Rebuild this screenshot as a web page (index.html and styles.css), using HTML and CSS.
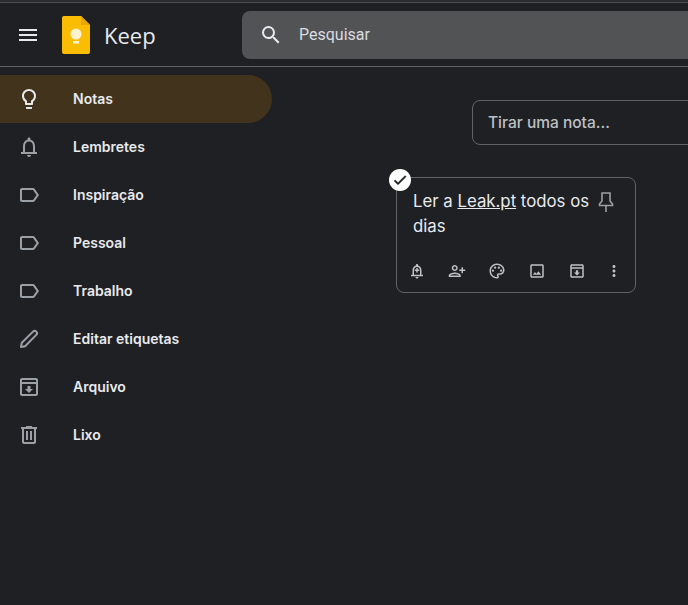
FILE: index.html
```html
<!DOCTYPE html>
<html lang="pt">
<head>
<meta charset="utf-8">
<title>Keep</title>
<link rel="stylesheet" href="styles.css">
</head>
<body>
<div class="app">
  <header class="topbar">
    <button class="menu-btn" aria-label="Menu">
      <svg viewBox="0 0 24 24" class="icon"><path d="M3 18h18v-2H3zm0-5h18v-2H3zm0-7v2h18V6z" fill="#e8eaed"/></svg>
    </button>
    <div class="brand">
      <svg viewBox="0 0 28 38" class="logo"><path d="M2 0h17l9 9v27a2 2 0 0 1-2 2H2a2 2 0 0 1-2-2V2a2 2 0 0 1 2-2z" fill="#fbbc04"/><path d="M19 0l9 9h-9z" fill="#e8a800"/><circle cx="14" cy="18" r="5.500" fill="#fdf3d0"/><rect x="11" y="25" width="6" height="2.600" fill="#fdf3d0"/></svg>
      <span class="brand-name">Keep</span>
    </div>
    <div class="search">
      <svg viewBox="0 0 24 24" class="icon"><path d="M15.500 14h-.79l-.28-.27A6.470 6.470 0 0 0 16 9.500 6.500 6.500 0 1 0 9.500 16c1.610 0 3.090-.59 4.230-1.570l.27.28v.79l5 4.990L20.490 19zm-6 0C7.010 14 5 11.990 5 9.500S7.010 5 9.500 5 14 7.010 14 9.500 11.990 14 9.500 14z" fill="#e8eaed"/></svg>
      <span class="search-text">Pesquisar</span>
    </div>
  </header>
  <div class="body">
    <nav class="sidebar">
      <a class="nav-item active">
        <svg viewBox="0 0 24 24" class="icon"><path d="M9 21c0 .55.45 1 1 1h4c.55 0 1-.45 1-1v-1H9zm3-19C8.140 2 5 5.140 5 9c0 2.380 1.190 4.470 3 5.740V17c0 .55.45 1 1 1h6c.55 0 1-.45 1-1v-2.260c1.810-1.270 3-3.360 3-5.740 0-3.860-3.140-7-7-7zm2.850 11.100-.85.6V16h-4v-2.300l-.85-.6A4.997 4.997 0 0 1 7 9c0-2.760 2.240-5 5-5s5 2.240 5 5c0 1.630-.8 3.160-2.150 4.100z" fill="#e8eaed"/></svg>
        <span>Notas</span>
      </a>
      <a class="nav-item">
        <svg viewBox="0 0 24 24" class="icon dim"><path d="M18 17v-6c0-3.070-1.630-5.640-4.500-6.320V4c0-.83-.67-1.500-1.500-1.500s-1.500.67-1.500 1.500v.68C7.640 5.360 6 7.920 6 11v6H4v2h16v-2h-2zm-2 0H8v-6c0-2.480 1.510-4.500 4-4.500s4 2.020 4 4.500v6zm-4 5c1.100 0 2-.9 2-2h-4c0 1.100.9 2 2 2z"/></svg>
        <span>Lembretes</span>
      </a>
      <a class="nav-item">
        <svg viewBox="0 0 24 24" class="icon dim"><path d="M17.630 5.840C17.270 5.330 16.670 5 16 5L5 5.010C3.900 5.010 3 5.900 3 7v10c0 1.100.9 1.990 2 1.990L16 19c.67 0 1.270-.33 1.630-.84L22 12l-4.370-6.160zM16 17H5V7h11l3.550 5L16 17z"/></svg>
        <span>Inspiração</span>
      </a>
      <a class="nav-item">
        <svg viewBox="0 0 24 24" class="icon dim"><path d="M17.630 5.840C17.270 5.330 16.670 5 16 5L5 5.010C3.900 5.010 3 5.900 3 7v10c0 1.100.9 1.990 2 1.990L16 19c.67 0 1.270-.33 1.630-.84L22 12l-4.370-6.160zM16 17H5V7h11l3.550 5L16 17z"/></svg>
        <span>Pessoal</span>
      </a>
      <a class="nav-item">
        <svg viewBox="0 0 24 24" class="icon dim"><path d="M17.630 5.840C17.270 5.330 16.670 5 16 5L5 5.010C3.900 5.010 3 5.900 3 7v10c0 1.100.9 1.990 2 1.990L16 19c.67 0 1.270-.33 1.630-.84L22 12l-4.370-6.160zM16 17H5V7h11l3.550 5L16 17z"/></svg>
        <span>Trabalho</span>
      </a>
      <a class="nav-item">
        <svg viewBox="0 0 24 24" class="icon line"><path d="M4 20l.8-4.200L16 4.600a2.300 2.300 0 0 1 3.300 3.300L8.100 19.200z"/></svg>
        <span>Editar etiquetas</span>
      </a>
      <a class="nav-item">
        <svg viewBox="0 0 24 24" class="icon dim"><path d="M19 3H5c-1.100 0-2 .9-2 2v14c0 1.100.9 2 2 2h14c1.100 0 2-.9 2-2V5c0-1.100-.9-2-2-2zm0 2v2H5V5h14zM5 19V9h14v10H5zm8.500-8h-3v3H8l4 4 4-4h-2.500z"/></svg>
        <span>Arquivo</span>
      </a>
      <a class="nav-item">
        <svg viewBox="0 0 24 24" class="icon dim"><path d="M15 4V3H9v1H4v2h1v13c0 1.100.9 2 2 2h10c1.100 0 2-.9 2-2V6h1V4h-5zm2 15H7V6h10v13zM9 8h2v9H9zm4 0h2v9h-2z"/></svg>
        <span>Lixo</span>
      </a>
    </nav>
    <main class="content">
      <div class="composer">Tirar uma nota...</div>
      <article class="note">
        <span class="check"><svg viewBox="0 0 24 24" class="check-icon"><path d="M9 16.200 4.800 12l-1.400 1.400L9 19 21 7l-1.400-1.400z"/></svg></span>
        <div class="note-head">
          <p class="note-text">Ler a <u>Leak.pt</u> todos os dias</p>
          <svg viewBox="0 0 24 24" class="icon pin"><path d="M8 3h8v8l2.500 3v1.500h-13V14L8 11zM12 15.500V22"/></svg>
        </div>
        <div class="note-tools">
          <svg viewBox="0 0 24 24" class="tool"><path d="M18 17v-6c0-3.070-1.630-5.640-4.500-6.320V4c0-.83-.67-1.500-1.500-1.500s-1.500.67-1.500 1.500v.68C7.640 5.360 6 7.920 6 11v6H4v2h16v-2h-2zm-2 0H8v-6c0-2.480 1.510-4.500 4-4.500s4 2.020 4 4.500v6zm-4 5c1.100 0 2-.9 2-2h-4c0 1.100.9 2 2 2zm1-14h-2v2H9v2h2v2h2v-2h2v-2h-2z"/></svg>
          <svg viewBox="0 0 24 24" class="tool"><path d="M9 12c2.200 0 4-1.800 4-4s-1.800-4-4-4-4 1.800-4 4 1.800 4 4 4zm0-6c1.100 0 2 .9 2 2s-.9 2-2 2-2-.9-2-2 .9-2 2-2zm0 8c-2.700 0-8 1.300-8 4v2h16v-2c0-2.700-5.300-4-8-4zm-6 4c.2-.7 3.300-2 6-2s5.800 1.300 6 2H3zm17-8V7h-2v3h-3v2h3v3h2v-3h3v-2z"/></svg>
          <svg viewBox="0 0 24 24" class="tool"><path d="M12 22C6.490 22 2 17.510 2 12S6.490 2 12 2s10 4.040 10 9c0 3.310-2.690 6-6 6h-1.770c-.28 0-.5.22-.5.5 0 .12.05.23.13.33.41.47.64 1.060.64 1.670A2.500 2.500 0 0 1 12 22zm0-18c-4.410 0-8 3.590-8 8s3.590 8 8 8c.28 0 .5-.22.5-.5a.54.54 0 0 0-.14-.35c-.41-.46-.63-1.050-.63-1.650a2.500 2.500 0 0 1 2.500-2.500H16c2.210 0 4-1.790 4-4 0-3.860-3.590-7-8-7z"/><circle cx="6.500" cy="11.500" r="1.500"/><circle cx="9.500" cy="7.500" r="1.500"/><circle cx="14.500" cy="7.500" r="1.500"/><circle cx="17.500" cy="11.500" r="1.500"/></svg>
          <svg viewBox="0 0 24 24" class="tool"><path d="M19 3H5c-1.100 0-2 .9-2 2v14c0 1.100.9 2 2 2h14c1.100 0 2-.9 2-2V5c0-1.100-.9-2-2-2zm0 16H5V5h14v14zm-5.040-6.710-2.750 3.540-1.960-2.360L6.500 17h11z"/></svg>
          <svg viewBox="0 0 24 24" class="tool"><path d="M19 3H5c-1.100 0-2 .9-2 2v14c0 1.100.9 2 2 2h14c1.100 0 2-.9 2-2V5c0-1.100-.9-2-2-2zm0 2v2H5V5h14zM5 19V9h14v10H5zm8.500-8h-3v3H8l4 4 4-4h-2.500z"/></svg>
          <svg viewBox="0 0 24 24" class="tool dots"><path d="M12 8c1.100 0 2-.9 2-2s-.9-2-2-2-2 .9-2 2 .9 2 2 2zm0 2c-1.100 0-2 .9-2 2s.9 2 2 2 2-.9 2-2-.9-2-2-2zm0 6c-1.100 0-2 .9-2 2s.9 2 2 2 2-.9 2-2-.9-2-2-2z"/></svg>
        </div>
      </article>
    </main>
  </div>
</div>
</body>
</html>
```
FILE: styles.css
```css
* { box-sizing: border-box; }
html, body { margin: 0; height: 100%; }
body {
  background: #1f2024;
  color: #e8eaed;
  font-family: Inter, Roboto, "Liberation Sans", sans-serif;
  overflow: hidden;
}
.app { width: 688px; height: 605px; overflow: hidden; border-top: 2px solid #2b2c2f; }
.topbar {
  height: 65px;
  display: flex;
  align-items: flex-start;
  border-top: 1px solid #4a4b4e;
  border-bottom: 1px solid #5f6368;
  width: 1000px;
}
.menu-btn {
  border: 0;
  background: none;
  padding: 0;
  margin: 20px 0 0 16px;
  width: 24px;
  height: 24px;
}
.icon { width: 24px; height: 24px; display: block; flex: none; }
.dim { fill: #9aa0a6; }
.line { fill: none; stroke: #9aa0a6; stroke-width: 2; stroke-linejoin: round; }
.brand { display: flex; align-items: center; margin: 13px 0 0 22px; width: 180px; }
.logo { width: 28px; height: 38px; flex: none; }
.brand-name { font-size: 22px; margin: -1px 0 0 14px; color: #e8eaed; font-family: "Open Sans", Roboto, sans-serif; }
.search {
  width: 720px;
  height: 48px;
  margin-top: 8px;
  background: #525355;
  border-radius: 8px;
  display: flex;
  align-items: center;
  padding-left: 17px;
  fill: #e8eaed;
}
.search-text { margin: -1px 0 0 16px; font-size: 16px; color: #dadce0; font-family: Roboto, sans-serif; }
.body { display: flex; height: 538px; }
.sidebar { width: 280px; flex: none; padding-top: 8px; }
.nav-item {
  display: flex;
  align-items: center;
  height: 48px;
  width: 272px;
  padding-left: 17px;
  border-radius: 0 24px 24px 0;
  font-size: 14px;
  font-weight: 600;
  color: #e8eaed;
}
.nav-item span { margin: -2px 0 0 32px; }
.active { background: #41331c; }
.content { position: relative; flex: none; width: 408px; }
.composer {
  width: 480px;
  height: 45px;
  margin: 33px 0 0 192px;
  border: 1px solid #5f6368;
  border-radius: 8px;
  padding-left: 15px;
  display: flex;
  align-items: center;
  font-size: 15.500px;
  font-weight: 500;
  color: #bdc1c6;
}
.note {
  position: relative;
  width: 240px;
  height: 116px;
  margin: 32px 0 0 116px;
  border: 1px solid #5f6368;
  border-radius: 8px;
  padding: 11px 0 0 16px;
  display: flex;
  flex-direction: column;
}
.check {
  position: absolute;
  left: -8px;
  top: -9px;
  width: 22px;
  height: 22px;
  border-radius: 50%;
  background: #fff;
  display: flex;
  align-items: center;
  justify-content: center;
}
.check-icon { width: 16px; height: 16px; fill: #202124; stroke: #202124; stroke-width: 1; }
.note-head { display: flex; height: 64px; }
.note-text { margin: 0; width: 181px; font-size: 16.800px; line-height: 25px; color: #e8eaed; }
.pin { margin-top: 1px; fill: none; stroke: #9aa0a6; stroke-width: 1.6; }
.note-tools { display: flex; gap: 22px; margin-left: -5px; margin-top: 9px; }
.tool { width: 18px; height: 18px; fill: #bdc1c6; display: block; flex: none; }
.dots { margin-left: -3px; }
```
